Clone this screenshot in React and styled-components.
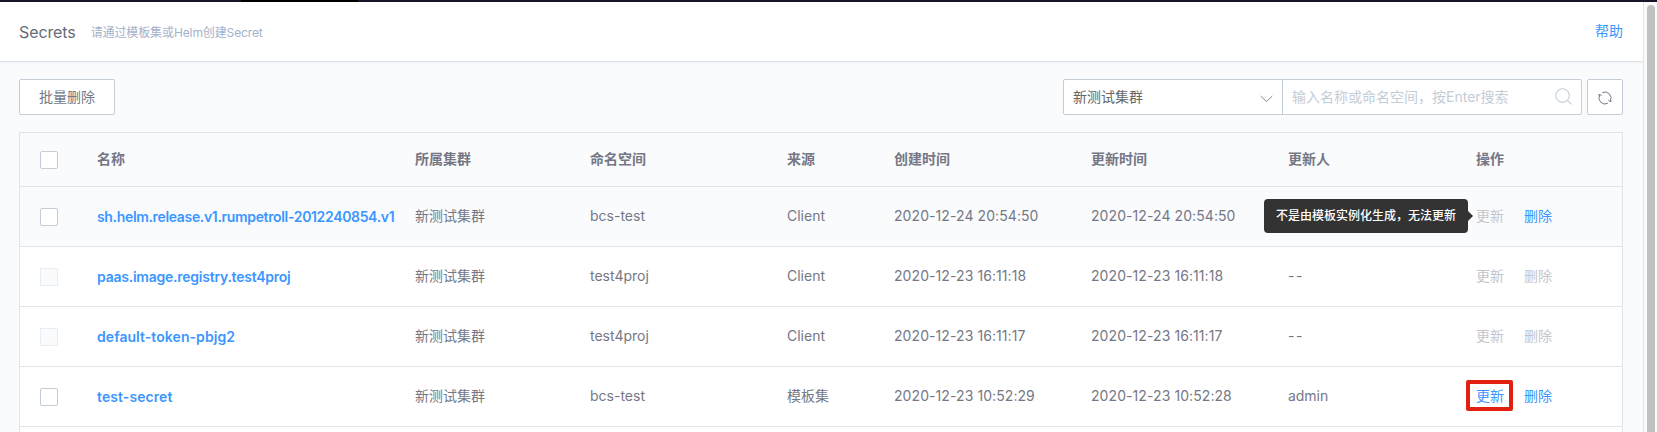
import React from 'react';
import styled, { createGlobalStyle, css } from 'styled-components';

const GlobalStyle = createGlobalStyle`
  * { box-sizing: border-box; }
  html, body { margin: 0; height: 100%; overflow: hidden; }
  body {
    background: #fafbfd;
    color: #757785;
    font: 14px/20px Inter, "Noto Sans CJK SC", sans-serif;
  }
  #root { height: 100%; }
  button, input { font: inherit; }
`;

const Window = styled.div`
  display: flex;
  flex-direction: column;
  height: 432px;
  overflow: hidden;
`;

const NavStrip = styled.div`
  flex: none;
  height: 2px;
  padding-left: 241px;
  background: #181326;
`;

const NavActive = styled.div`
  width: 117px;
  height: 2px;
  background: #000;
`;

const Body = styled.div`
  flex: 1;
  display: flex;
  min-height: 0;
`;

const Main = styled.main`
  flex: 1;
  display: flex;
  flex-direction: column;
  min-width: 0;
`;

const ScrollTrack = styled.div`
  flex: none;
  width: 14px;
  padding: 3px 2px 0 3px;
  background: #fafafa;
  border-left: 1px solid #e4e4e6;
`;

const ScrollThumb = styled.div`
  width: 8px;
  height: 600px;
  border-radius: 4px;
  background: #c1c1c1;
`;

const Header = styled.header`
  flex: none;
  display: flex;
  align-items: center;
  height: 60px;
  padding: 0 20px 2px 19px;
  background: #fff;
  border-bottom: 1px solid #dde4eb;
  box-shadow: 0 1px 2px rgba(0, 0, 0, 0.05);
`;

const Title = styled.h1`
  margin: 2px 15px 0 0;
  font-size: 16px;
  font-weight: 400;
  letter-spacing: -0.1px;
  color: #666b78;
`;

const Hint = styled.span`
  margin-top: 5px;
  font-size: 12px;
  letter-spacing: -0.11px;
  color: #a3b1cc;
`;

const Link = styled.a`
  color: ${(p) => (p.$disabled ? '#c4c6cc' : '#3c96ff')};
  cursor: ${(p) => (p.$disabled ? 'not-allowed' : 'pointer')};
`;

const HelpLink = styled(Link)`
  margin-left: auto;
`;

const Toolbar = styled.div`
  display: flex;
  justify-content: space-between;
  padding: 17px 20px 17px 19px;
`;

const box = css`
  height: 36px;
  background: #fff;
  border: 1px solid #c3cdd7;
  border-radius: 2px;
`;

const Button = styled.button`
  ${box}
  width: 96px;
  padding: 0 0 1px;
  color: #737987;
`;

const IconButton = styled.button`
  ${box}
  display: flex;
  align-items: center;
  justify-content: center;
  width: 36px;
  margin-left: 5px;
  padding: 0;
  color: #737987;
`;

const Filters = styled.div`
  display: flex;
`;

const Select = styled.div`
  ${box}
  display: flex;
  align-items: center;
  justify-content: space-between;
  width: 220px;
  padding: 0 9px 1px 9px;
  border-radius: 2px 0 0 2px;
  color: #666;
`;

const Search = styled.label`
  ${box}
  display: flex;
  align-items: center;
  width: 300px;
  margin-left: -1px;
  padding: 0 9px 1px 9px;
  border-radius: 0 2px 2px 0;
`;

const SearchInput = styled.input`
  flex: 1;
  min-width: 0;
  padding: 0;
  border: 0;
  outline: 0;
  background: none;
  &::placeholder { color: #c3cdd7; opacity: 1; }
`;

const Table = styled.div`
  margin: 0 20px 0 19px;
  border: 1px solid #dde4eb;
  border-bottom: 0;
`;

const Row = styled.div`
  display: grid;
  grid-template-columns: 77px 318px 175px 197px 107px 197px 197px 188px 1fr;
  align-items: center;
  height: ${(p) => (p.$head ? 54 : 60)}px;
  border-bottom: 1px solid #e2e4e8;
  background: ${(p) => (p.$head || p.$active ? '#fafbfd' : '#fff')};
  font-weight: ${(p) => (p.$head ? 700 : 400)};
  white-space: nowrap;
`;

const Cell = styled.div`
  padding-bottom: 2px;
  letter-spacing: ${(p) => p.$spacing || 0}px;
`;

const CheckCell = styled.div`
  padding-left: 20px;
`;

const Checkbox = styled.div`
  width: 18px;
  height: 18px;
  border: 1px solid ${(p) => (p.$disabled ? '#e6edf4' : '#c3cdd7')};
  border-radius: ${(p) => (p.$disabled ? 0 : 2)}px;
  background: ${(p) => (p.$disabled ? '#fafbfd' : '#fff')};
`;

const Name = styled(Link)`
  font-weight: 600;
  letter-spacing: ${(p) => p.$spacing || 0}px;
`;

const Actions = styled.div`
  display: flex;
  gap: 20px;
  padding-bottom: 2px;
`;

const ActionSlot = styled.span`
  position: relative;
`;

const Tooltip = styled.span`
  position: absolute;
  top: -7px;
  right: 36px;
  width: 204px;
  height: 34px;
  border-radius: 4px;
  background: #333;
  color: #fff;
  font-size: 12px;
  font-weight: 500;
  line-height: 33px;
  text-align: center;

  &::after {
    content: '';
    position: absolute;
    top: 12px;
    left: 100%;
    border: 5px solid transparent;
    border-left-color: #333;
    border-right: 0;
  }
`;

const Highlight = styled.span`
  position: absolute;
  inset: -6px -9px -5px -10px;
  border: 4px solid #e22010;
  border-radius: 2px;
`;

const ChevronIcon = () => (
  <svg width="13" height="8" viewBox="0 0 13 8" fill="none" stroke="#858a96" style={{ marginTop: 4 }}>
    <path d="M.7 1 6.5 6.6 12.3 1" />
  </svg>
);

const SearchIcon = () => (
  <svg width="17" height="17" viewBox="0 0 17 17" fill="none" stroke="#c3cdd7" strokeWidth="1.1">
    <circle cx="7.6" cy="7.6" r="6.8" />
    <path d="m12.4 12.4 4 4" />
  </svg>
);

const RefreshIcon = () => (
  <svg width="14" height="14" viewBox="0 0 14 14" fill="none" stroke="currentColor" strokeWidth="1" style={{ marginTop: 1 }}>
    <path d="M4.2 1.7A6 6 0 0 1 12.2 10M9.8 12.3A6 6 0 0 1 1.8 4" />
    <path d="M.2 4.2 2 3.2 3.6 4.9M13.8 9.8 12 10.8 10.4 9.1" />
  </svg>
);

const columns = ['名称', '所属集群', '命名空间', '来源', '创建时间', '更新时间', '更新人', '操作'];

const secrets = [
  { name: 'sh.helm.release.v1.rumpetroll-2012240854.v1', nameSpacing: -0.34, ns: 'bcs-test', source: 'Client', time: '2020-12-24 20:54:50', updated: '2020-12-24 20:54:50', user: '--', canUpdate: false, canDelete: true, active: true, tip: '不是由模板实例化生成，无法更新' },
  { name: 'paas.image.registry.test4proj', nameSpacing: -0.24, ns: 'test4proj', source: 'Client', time: '2020-12-23 16:11:18', updated: '2020-12-23 16:11:18', user: '--' },
  { name: 'default-token-pbjg2', nameSpacing: 0.06, ns: 'test4proj', source: 'Client', time: '2020-12-23 16:11:17', updated: '2020-12-23 16:11:17', user: '--' },
  { name: 'test-secret', nameSpacing: 0.08, ns: 'bcs-test', source: '模板集', time: '2020-12-23 10:52:29', updated: '2020-12-23 10:52:28', user: 'admin', canUpdate: true, canDelete: true, marked: true },
];

const SecretRow = ({ item }) => (
  <Row $active={item.active}>
    <CheckCell><Checkbox $disabled={!item.canDelete} /></CheckCell>
    <div><Name $spacing={item.nameSpacing}>{item.name}</Name></div>
    <Cell>新测试集群</Cell>
    <Cell>{item.ns}</Cell>
    <Cell>{item.source}</Cell>
    <Cell $spacing={0.08}>{item.time}</Cell>
    <Cell $spacing={0.08}>{item.updated}</Cell>
    <Cell $spacing={item.user === '--' ? 1.5 : -0.05}>{item.tip ? '' : item.user}</Cell>
    <Actions>
      <ActionSlot>
        <Link $disabled={!item.canUpdate}>更新</Link>
        {item.tip && <Tooltip>{item.tip}</Tooltip>}
        {item.marked && <Highlight />}
      </ActionSlot>
      <Link $disabled={!item.canDelete}>删除</Link>
    </Actions>
  </Row>
);

export default function App() {
  return (
    <Window lang="zh-CN">
      <GlobalStyle />
      <NavStrip><NavActive /></NavStrip>
      <Body>
        <Main>
          <Header>
            <Title>Secrets</Title>
            <Hint>请通过模板集或Helm创建Secret</Hint>
            <HelpLink>帮助</HelpLink>
          </Header>
          <Toolbar>
            <Button>批量删除</Button>
            <Filters>
              <Select>新测试集群<ChevronIcon /></Select>
              <Search>
                <SearchInput placeholder="输入名称或命名空间，按Enter搜索" />
                <SearchIcon />
              </Search>
              <IconButton><RefreshIcon /></IconButton>
            </Filters>
          </Toolbar>
          <Table>
            <Row $head>
              <CheckCell><Checkbox /></CheckCell>
              {columns.map((c) => <Cell key={c}>{c}</Cell>)}
            </Row>
            {secrets.map((s) => <SecretRow key={s.name} item={s} />)}
            <Row />
          </Table>
        </Main>
        <ScrollTrack><ScrollThumb /></ScrollTrack>
      </Body>
    </Window>
  );
}
